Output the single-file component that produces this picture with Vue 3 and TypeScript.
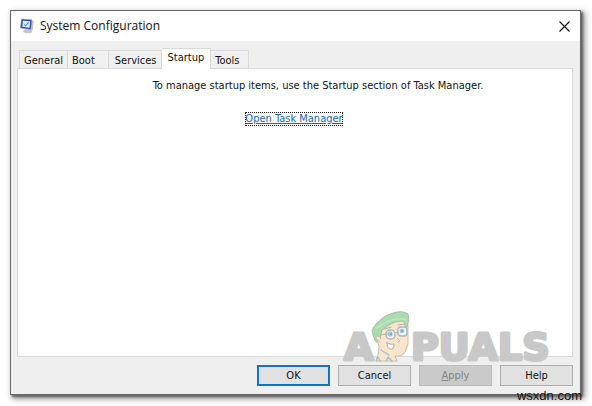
<script setup lang="ts">
import { ref } from 'vue'

const tabs = ['General', 'Boot', 'Services', 'Startup', 'Tools']
const active = ref('Startup')
</script>

<template>
  <div class="desktop">
    <main class="window">
      <header class="titlebar">
        <svg class="app-icon" viewBox="0 0 16 16" aria-hidden="true">
          <path d="M11 1.5l3.8 1-1 9-3.2 3.5z" fill="#c9c6c0" />
          <path d="M5 11.5l5 .5 3.5 1-1.5 2.5-5 .3-4-1.3z" fill="#c6c4c2" />
          <path d="M1.6.6l11 .8-1.1 10.2L.5 10z" fill="#3446bd" stroke="#8290d0" stroke-width=".6" />
          <path d="M3.1 2.4l7.8.6-.8 6.9-7.6-1z" fill="#d7efff" />
          <path d="M4.6 6.4l1.4 1.4 3.2-3.6" fill="none" stroke="#3985cd" stroke-width="1.1" />
        </svg>
        <h1>System Configuration</h1>
        <button class="close" type="button" aria-label="Close">
          <svg viewBox="0 0 11 11"><path d="M.5.5l10 10M10.5.5l-10 10" stroke="#111" stroke-width="1.1" /></svg>
        </button>
      </header>

      <div class="body">
        <div class="tabs" role="tablist">
          <button
            v-for="tab in tabs"
            :key="tab"
            type="button"
            role="tab"
            class="tab"
            :class="{ selected: tab === active }"
            :aria-selected="tab === active"
            @click="active = tab"
          >{{ tab }}</button>
        </div>
        <section class="panel" role="tabpanel">
          <p>To manage startup items, use the Startup section of Task Manager.</p>
          <a href="#">Open Task Manager</a>
        </section>
        <footer class="actions">
          <button class="btn primary" type="button">OK</button>
          <button class="btn" type="button">Cancel</button>
          <button class="btn" type="button" disabled><u>A</u>pply</button>
          <button class="btn" type="button">Help</button>
        </footer>
      </div>
    </main>

    <svg class="watermark" viewBox="340 306 220 62" aria-hidden="true">
      <g class="letters">
        <text x="344" y="360">A</text>
        <text x="411" y="360">PUALS</text>
      </g>
      <g class="mascot">
        <path d="M376 337l3 9-1 9-2 6h21l-2-5q7 1 10-4l3-8v-19l-7-7-21 9z" fill="#f8e5cb" stroke="#c0bcaa" />
        <path d="M376 342q-3-5-4-11 1-4 5-8 7-8 16-10 10-3 15 1 2 6-1 13l-2-1q0-4-2-5-8 0-14 4l-7 5-2 9z" fill="#a9dcb0" stroke="#adb9a9" />
        <path d="M377 328q11-10 28-9" fill="none" stroke="#bbe6bd" stroke-width="2" />
        <path d="M380 337q-5-3-4 2l4 3" fill="#f8e5cb" stroke="#c9b897" />
        <rect x="386" y="330" width="9" height="9" rx="4" fill="#f2f5f6" stroke="#aeb7bd" stroke-width="1.5" />
        <rect x="398" y="327" width="9" height="9" rx="3" fill="#f2f5f6" stroke="#aeb7bd" stroke-width="1.5" />
        <path d="M381 335l5-1M395 333l3-1M385 329l6-2M398 325l6-1" fill="none" stroke="#b0b9b0" stroke-width="1.2" />
        <circle cx="390" cy="334" r="2.8" fill="#a9cbe0" /><circle cx="402" cy="331" r="2.4" fill="#a9cbe0" />
        <circle cx="391" cy="334" r="1" fill="#7993a9" /><circle cx="402" cy="331" r=".9" fill="#7993a9" />
        <path d="M397 338l3 3-2 1" fill="none" stroke="#d2b797" />
        <path d="M387 343q4 2 7 1 0 6-4 5-3-1-3-6z" fill="#fff" stroke="#b5aba2" />
        <path d="M381 350l8 5M376 361l2-4 2 4M386 361l2-4 4 4" fill="none" stroke="#a9bdc6" stroke-width="1.3" />
      </g>
    </svg>
    <span class="credit">wsxdn.com</span>
  </div>
</template>

<style>
body { margin: 0; background: #fff; }
</style>

<style scoped>
* { box-sizing: border-box; }
.desktop {
  position: relative;
  display: flex;
  min-height: 100vh;
  padding: 10px 11px 11px 10px;
  font-family: "DejaVu Sans Condensed", "DejaVu Sans", sans-serif;
  font-size: 11px;
  line-height: 14px;
  color: #111;
}
.window {
  flex: 1;
  display: flex;
  flex-direction: column;
  background: #efefef;
  border: 1px solid #666;
  box-shadow: 2px 2px 2px #666, 3px 3px 6px 1px #999;
}
.titlebar {
  display: flex;
  align-items: center;
  height: 30px;
  padding: 0 10px 0 9px;
  background: #fff;
}
.app-icon { width: 15px; height: 16px; }
h1 {
  margin: 0 auto 0 5px;
  font: 12px/16px "Open Sans", sans-serif;
}
button { font: inherit; color: inherit; }
.close {
  display: flex;
  padding: 0;
  border: 0;
  background: none;
}
.close svg { width: 11px; height: 11px; }
.body {
  flex: 1;
  display: flex;
  flex-direction: column;
  padding: 7px 7px 8px 6px;
}
.tabs {
  display: flex;
  align-items: flex-end;
  padding-left: 2px;
}
.tab {
  height: 18px;
  padding: 2px 4px 0;
  border: 1px solid #d9d9d9;
  border-width: 1px 1px 0 0;
  background: #f0f0f0;
  white-space: nowrap;
}
.tab:first-child { border-left-width: 1px; }
.tab:nth-child(2) { padding-right: 13px; }
.tab:nth-child(3) { padding-left: 6px; }
.tab:last-child { padding-right: 9px; }
.tab.selected {
  z-index: 1;
  height: 21px;
  margin-bottom: -1px;
  padding: 0 6px 3px;
  background: #fff;
}
.panel {
  flex: 1;
  display: flex;
  flex-direction: column;
  align-items: center;
  gap: 19px;
  padding: 10px 0 20px 46px;
  border: 1px solid #d9d9d9;
  background: #fff;
}
.panel p { margin: 0; }
.panel a {
  margin-right: 48px;
  color: #1466b8;
  outline: 1px dotted #111;
  outline-offset: -1px;
}
.actions {
  display: flex;
  justify-content: flex-end;
  gap: 8px;
  padding-top: 8px;
}
.btn {
  width: 73px;
  height: 21px;
  padding: 0;
  border: 1px solid #adadad;
  background: #e1e1e1;
}
.btn.primary { border: 2px solid #0f74c8; }
.btn:disabled {
  border-color: #bcbcbc;
  background: #cacaca;
  color: #858585;
}
.watermark {
  position: absolute;
  right: 32px;
  bottom: 38px;
  width: 220px;
  height: 62px;
  pointer-events: none;
}
.letters {
  font: bold 38px "DejaVu Sans", sans-serif;
  fill: #c8c8c8;
  stroke: #c8c8c8;
  stroke-width: 3px;
  stroke-linejoin: round;
}
.mascot {
  stroke-linejoin: round;
  stroke-linecap: round;
}
.credit {
  position: absolute;
  right: 10px;
  bottom: 3px;
  font: 13px/14px "Liberation Sans", Arial, sans-serif;
}
</style>
